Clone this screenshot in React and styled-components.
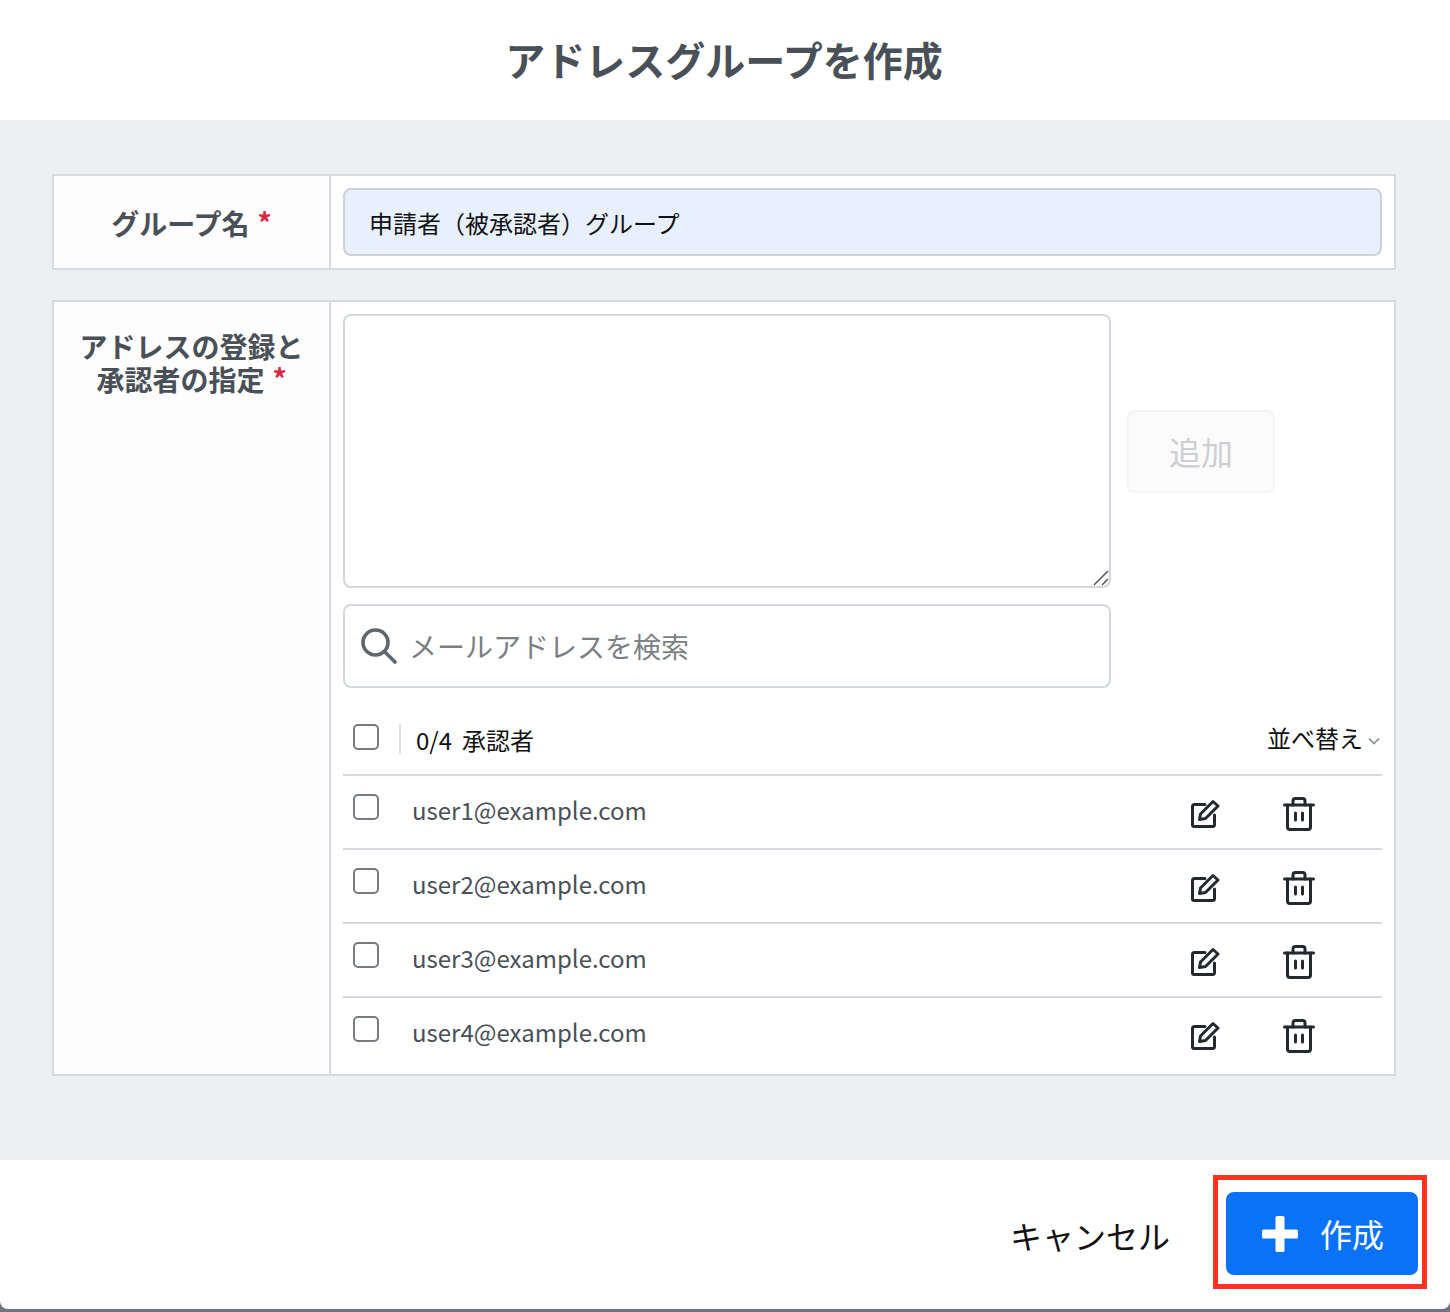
import React from 'react';
import styled, { createGlobalStyle } from 'styled-components';

const EMAILS = ['user1@example.com', 'user2@example.com', 'user3@example.com', 'user4@example.com'];

const EditIcon = () => (
  <svg width="30" height="30" viewBox="0 0 30 30" fill="none" stroke="#23292f" strokeWidth="3" strokeLinejoin="round" strokeLinecap="round">
    <path d="M15 5.500H4.500a2 2 0 0 0-2 2V26a1.500 1.500 0 0 0 1.500 1.500h18.500a2 2 0 0 0 2-2V16" />
    <path d="M9.500 20.500l1-5.500L23 2.500l5 4.500L15.500 19.500z" />
  </svg>
);

const TrashIcon = () => (
  <svg width="32" height="34" viewBox="0 0 32 34" fill="none" stroke="#23292f" strokeWidth="3" strokeLinejoin="round" strokeLinecap="round">
    <path d="M1.500 8h29" />
    <path d="M10 8V4a2.500 2.500 0 0 1 2.500-2.500h7A2.500 2.500 0 0 1 22 4v4" />
    <path d="M4.500 8v22a2.500 2.500 0 0 0 2.500 2.500h18a2.500 2.500 0 0 0 2.500-2.500V8" />
    <path d="M12.500 16v7M19.500 16v7" />
  </svg>
);

const SearchIcon = () => (
  <svg width="38" height="38" viewBox="0 0 38 38" fill="none" stroke="#5f666e" strokeWidth="3.600" strokeLinecap="round">
    <circle cx="15.500" cy="15.500" r="12.500" />
    <path d="M24.500 24.500L35 35" />
  </svg>
);

const Chevron = () => (
  <svg width="12" height="8" viewBox="0 0 12 8" fill="none" stroke="#8a9098" strokeWidth="1.700">
    <path d="M1 1.500l5 5 5-5" />
  </svg>
);

const PlusIcon = () => (
  <svg width="36" height="36" viewBox="0 0 36 36" fill="#fff">
    <rect x="13.500" y="0" width="9" height="36" rx="1.500" />
    <rect x="0" y="13.500" width="36" height="9" rx="1.500" />
  </svg>
);

const ResizeGrip = () => (
  <GripIcon width="16" height="16" viewBox="0 0 16 16" fill="none" stroke="#555" strokeWidth="1.500">
    <path d="M1 15L15 1M9 15l6-6" />
  </GripIcon>
);

const App = () => {
  return (
    <>
      <GlobalStyle />
      <Modal>
        <Header>アドレスグループを作成</Header>
        <Body>
          <Section>
            <LabelCell>
              <Label>
                グループ名<Required>*</Required>
              </Label>
            </LabelCell>
            <ValueCell>
              <NameInput readOnly value="申請者（被承認者）グループ" />
            </ValueCell>
          </Section>
          <Section>
            <LabelCell>
              <Label $top>
                アドレスの登録と
                <br />
                承認者の指定<Required>*</Required>
              </Label>
            </LabelCell>
            <ListCell>
              <AddRow>
                <AreaWrap>
                  <AddressArea />
                  <ResizeGrip />
                </AreaWrap>
                <AddButton disabled>追加</AddButton>
              </AddRow>
              <SearchBox>
                <SearchIcon />
                <SearchInput placeholder="メールアドレスを検索" />
              </SearchBox>
              <ListHeader>
                <HeaderLeft>
                  <Check />
                  <Divider />
                  <Count>0/4</Count>
                  <Count>承認者</Count>
                </HeaderLeft>
                <SortButton>
                  並べ替え
                  <Chevron />
                </SortButton>
              </ListHeader>
              {EMAILS.map(email => (
                <ListRow key={email}>
                  <Check />
                  <Email>{email}</Email>
                  <EditAction>
                    <EditIcon />
                  </EditAction>
                  <DeleteAction>
                    <TrashIcon />
                  </DeleteAction>
                </ListRow>
              ))}
            </ListCell>
          </Section>
        </Body>
        <Footer>
          <CancelButton>キャンセル</CancelButton>
          <Highlight>
            <CreateButton>
              <PlusIcon />
              <CreateText>作成</CreateText>
            </CreateButton>
          </Highlight>
        </Footer>
      </Modal>
    </>
  );
};

const GlobalStyle = createGlobalStyle`
  html, body {
    margin: 0;
    padding: 0;
    background-color: #6f7580;
  }

  * {
    box-sizing: border-box;
  }

  body, button, input, textarea {
    font-family: "Noto Sans CJK JP", "Noto Sans", sans-serif;
  }
`;

const Modal = styled.div`
  width: 1450px;
  height: 1309px;
  margin-bottom: 3px;
  display: flex;
  flex-direction: column;
  background-color: #fff;
  border-radius: 0 0 8px 8px;
  overflow: hidden;
`;

const Header = styled.h1`
  height: 120px;
  margin: 0;
  padding: 0 2px 2px 0;
  display: flex;
  align-items: center;
  justify-content: center;
  font-size: 40px;
  font-weight: 700;
  color: #495057;
`;

const Body = styled.div`
  height: 1040px;
  padding: 54px 54px 0 52px;
  display: flex;
  flex-direction: column;
  gap: 30px;
  background-color: #edeff3;
`;

const Section = styled.section`
  display: grid;
  grid-template-columns: 277px 1fr;
  border: 2px solid #d6dbe2;
  background-color: #fff;
`;

const LabelCell = styled.div`
  padding: 12px 0;
  display: flex;
  justify-content: center;
  border-right: 2px solid #d6dbe2;
  background-color: #fdfdfd;
`;

const Label = styled.div`
  padding-top: ${props => (props.$top ? '16px' : '2px')};
  align-self: ${props => (props.$top ? 'flex-start' : 'center')};
  font-size: 28px;
  font-weight: 700;
  line-height: 33px;
  text-align: center;
  color: #495057;
`;

const Required = styled.span`
  display: inline-block;
  margin-left: 8px;
  line-height: 1;
  color: #dc2743;
  position: relative;
  top: -1px;
`;

const ValueCell = styled.div`
  padding: 12px;
  min-width: 0;
`;

const ListCell = styled.div`
  padding: 12px 12px 2px;
  min-width: 0;
`;

const NameInput = styled.input`
  width: 100%;
  height: 68px;
  padding: 0 24px;
  display: block;
  font-size: 24px;
  color: #111;
  background-color: #e8f0fe;
  border: 2px solid #ccd2da;
  border-radius: 8px;
  outline: none;
`;

const AddRow = styled.div`
  display: flex;
  align-items: center;
  gap: 16px;
`;

const AreaWrap = styled.div`
  position: relative;
  width: 768px;
  height: 274px;
`;

const AddressArea = styled.textarea`
  width: 100%;
  height: 100%;
  display: block;
  padding: 12px;
  resize: none;
  background-color: #fff;
  border: 2px solid #d3d8df;
  border-radius: 8px;
  outline: none;
`;

const GripIcon = styled.svg`
  position: absolute;
  right: 2px;
  bottom: 2px;
`;

const AddButton = styled.button`
  width: 148px;
  height: 83px;
  font-size: 32px;
  color: #cdcfd2;
  background-color: #fbfbfc;
  border: 2px solid #f4f4f6;
  border-radius: 8px;
`;

const SearchBox = styled.div`
  width: 768px;
  height: 84px;
  margin-top: 16px;
  padding: 0 14px 0 15px;
  display: flex;
  align-items: center;
  gap: 11px;
  border: 2px solid #d3d8df;
  border-radius: 8px;
`;

const SearchInput = styled.input`
  flex: 1;
  min-width: 0;
  padding: 0;
  border: 0;
  outline: none;
  font-size: 28px;
  color: #333;

  &::placeholder {
    color: #7b7f84;
    opacity: 1;
  }
`;

const ListHeader = styled.div`
  height: 88px;
  padding: 36px 2px 0 10px;
  display: flex;
  align-items: flex-start;
  justify-content: space-between;
  border-bottom: 2px solid #d5d8df;
`;

const HeaderLeft = styled.div`
  display: flex;
  align-items: flex-start;
`;

const Check = styled.span`
  width: 26px;
  height: 26px;
  flex-shrink: 0;
  display: block;
  background-color: #fff;
  border: 2px solid #767b82;
  border-radius: 5px;
`;

const Divider = styled.span`
  width: 2px;
  height: 30px;
  margin: 0 15px 0 20px;
  background-color: #dcdfe4;
`;

const Count = styled.span`
  margin-right: 10px;
  font-size: 24px;
  line-height: 32px;
  color: #111;
`;

const SortButton = styled.button`
  padding: 0;
  display: flex;
  align-items: center;
  gap: 5px;
  font-size: 24px;
  line-height: 28px;
  color: #111;
  background: none;
  border: 0;

  svg {
    margin-top: 5px;
  }
`;

const ListRow = styled.div`
  height: 74px;
  padding: 18px 67px 0 10px;
  display: grid;
  grid-template-columns: 60px 1fr 92px 32px;
  align-items: flex-start;
  border-bottom: 2px solid #d5d8df;

  &:last-child {
    border-bottom: 0;
  }
`;

const Email = styled.span`
  margin: -1px 0 0 -1px;
  font-size: 24px;
  line-height: 34px;
  color: #495057;
`;

const EditAction = styled.span`
  margin: 5px 0 0 -1px;
  display: flex;
`;

const DeleteAction = styled.span`
  margin-top: 3px;
  display: flex;
`;

const Footer = styled.footer`
  flex: 1;
  padding: 15px 23px 0 0;
  display: flex;
  align-items: flex-start;
  justify-content: flex-end;
  gap: 43px;
`;

const CancelButton = styled.button`
  height: 114px;
  padding: 6px 0 0;
  font-size: 32px;
  color: #111;
  background: none;
  border: 0;
`;

const Highlight = styled.div`
  padding: 12px 4px 9px 8px;
  border: 5px solid #fb3320;
`;

const CreateButton = styled.button`
  width: 192px;
  height: 83px;
  padding: 0 0 0 2px;
  display: flex;
  align-items: center;
  justify-content: center;
  gap: 22px;
  font-size: 32px;
  color: #fff;
  background-color: #0a72f7;
  border: 0;
  border-radius: 8px;
`;

const CreateText = styled.span`
  margin-top: -2px;
`;

export default App;
